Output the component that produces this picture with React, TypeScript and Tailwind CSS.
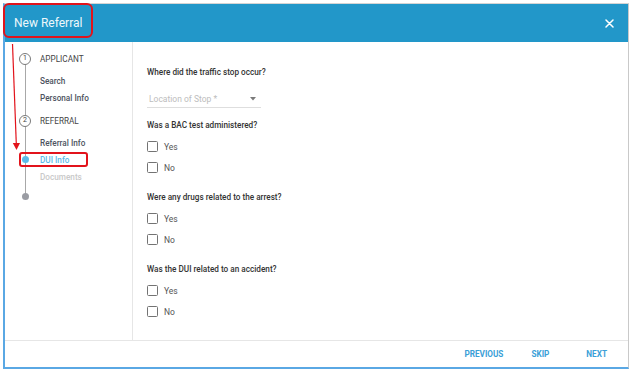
import React from "react";

const font = { fontFamily: "Roboto, 'Noto Sans', Arial, sans-serif" };

function Checkbox({ label }: { label: string }) {
  return (
    <div className="flex h-[21px] items-center">
      <div className="h-[11px] w-[11px] rounded-[1.5px] border-[1.5px] border-[#737373] bg-white" />
      <span className="ml-[6px] text-[8.5px] leading-[12px] text-[#555]">{label}</span>
    </div>
  );
}

function Question({ text, first }: { text: string; first?: boolean }) {
  return (
    <div className={first ? "mt-[11px]" : "mt-[13px]"}>
      <div className="text-[8.2px] font-medium leading-[12px] text-[#333]">{text}</div>
      <div className="mt-[5px]">
        <Checkbox label="Yes" />
        <Checkbox label="No" />
      </div>
    </div>
  );
}

function StepCircle({ n }: { n: number }) {
  return (
    <div className="flex h-[12px] w-[12px] items-center justify-center rounded-full border border-[#7a7a7a] bg-white text-[7px] leading-none text-[#444]">
      {n}
    </div>
  );
}

function Row({
  marker,
  label,
  cls,
  mt,
}: {
  marker?: React.ReactNode;
  label?: string;
  cls?: string;
  mt?: string;
}) {
  return (
    <div className={`relative flex h-[17px] items-center ${mt ?? ""}`}>
      <div className="flex w-[12px] items-center justify-center">{marker}</div>
      {label && <span className={`ml-[9px] text-[8.2px] leading-[12px] ${cls ?? ""}`}>{label}</span>}
    </div>
  );
}

export default function App() {
  return (
    <div className="relative h-[373px] w-[635px] overflow-hidden bg-white" style={font}>
      <div className="ml-[3px] mt-[3px] flex h-[366px] w-[626px] flex-col border-b-[2px] border-l-[2px] border-r border-t border-b-[#5aa8e4] border-l-[#5aa8e4] border-r-[#c9c9c9] border-t-[#d4d4d4] bg-white">
        {/* Header */}
        <div className="flex h-[38px] shrink-0 items-center justify-between bg-[#2297c9] pl-[9px] pr-[14px]">
          <span className="text-[12px] font-normal leading-none text-[#eef7fb]">New Referral</span>
          <svg width="9" height="9" viewBox="0 0 9 9">
            <path d="M1 1 L8 8 M8 1 L1 8" stroke="#ffffff" strokeWidth="1.5" strokeLinecap="round" />
          </svg>
        </div>

        {/* Body */}
        <div className="flex h-[298px] shrink-0">
          {/* Sidebar */}
          <div className="relative w-[128px] shrink-0 border-r border-[#e6e6e6] pl-[14px] pt-[8px]">
            <div className="absolute left-[20px] top-[17px] h-[137px] w-px bg-[#a8a8a8]" />
            <Row marker={<StepCircle n={1} />} label="APPLICANT" cls="text-[#444]" />
            <Row label="Search" cls="font-medium text-[#4d5360]" mt="mt-[5px]" />
            <Row label="Personal Info" cls="font-medium text-[#4d5360]" />
            <Row marker={<StepCircle n={2} />} label="REFERRAL" cls="text-[#444]" mt="mt-[6px]" />
            <Row label="Referral Info" cls="font-medium text-[#4d5360]" mt="mt-[5px]" />
            <Row
              marker={<div className="h-[7px] w-[7px] rounded-full bg-[#5bbbe9]" />}
              label="DUI Info"
              cls="font-medium text-[#5bb9e8]"
            />
            <Row label="Documents" cls="font-medium text-[#c9c9c9]" />
            <Row
              marker={<div className="h-[7px] w-[7px] rounded-full bg-[#9a9ca3]" />}
              mt="mt-[3px]"
            />
          </div>

          {/* Content */}
          <div className="flex-1 pl-[14px] pt-[24px]">
            <div className="text-[8.2px] font-medium leading-[12px] text-[#333]">
              Where did the traffic stop occur?
            </div>
            <div className="mt-[13px] flex h-[17px] w-[114px] items-center justify-between border-b border-[#dedede] pl-[2px] pr-[5px]">
              <span className="text-[8.5px] leading-[12px] text-[#bdbdbd]">Location of Stop *</span>
              <svg width="6" height="4" viewBox="0 0 6 4">
                <path d="M0 0 L6 0 L3 3.5 Z" fill="#7a7a7a" />
              </svg>
            </div>
            <Question text="Was a BAC test administered?" first />
            <Question text="Were any drugs related to the arrest?" />
            <Question text="Was the DUI related to an accident?" />
          </div>
        </div>

        {/* Footer */}
        <div className="flex flex-1 items-center justify-end border-t border-[#e6e6e6] pr-[21px]">
          <span className="text-[8.2px] font-bold leading-none text-[#3ba0d7]">PREVIOUS</span>
          <span className="ml-[28px] text-[8.2px] font-bold leading-none text-[#3ba0d7]">SKIP</span>
          <span className="ml-[37px] text-[8.2px] font-bold leading-none text-[#3ba0d7]">NEXT</span>
        </div>
      </div>

      {/* Annotations */}
      <div className="absolute left-[3px] top-[3px] h-[35px] w-[90px] rounded-[6px] border-2 border-[#e2131b]" />
      <div className="absolute left-[19px] top-[152px] h-[15px] w-[69px] rounded-[3px] border-2 border-[#e2131b]" />
      <svg className="absolute left-0 top-0" width="40" height="160" viewBox="0 0 40 160">
        <line x1="12.5" y1="44" x2="16.3" y2="144" stroke="#e2131b" strokeWidth="1.2" />
        <polygon points="12.8,143 20,143 16.5,150" fill="#e2131b" />
      </svg>
    </div>
  );
}
